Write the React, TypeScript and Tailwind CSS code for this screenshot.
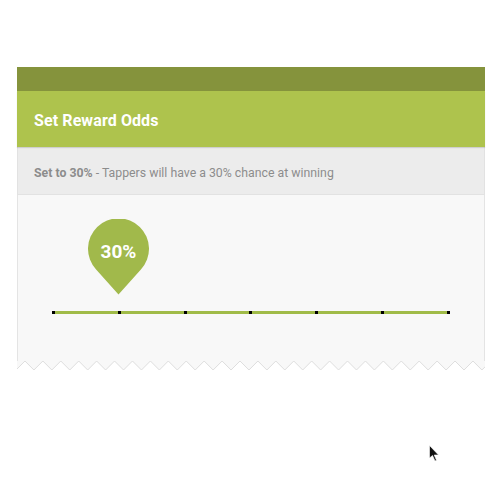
import React from "react"

const TICKS = [0, 1, 2, 3, 4, 5, 6]

function zigzagPoints(width: number, period: number, start: number, depth: number) {
  const pts: string[] = []
  for (let x = start; x <= width + period; x += period / 2) {
    const i = Math.round((x - start) / (period / 2))
    const y = i % 2 === 0 ? depth : 0
    pts.push(`${x.toFixed(2)},${y}`)
  }
  return pts
}

function Zigzag() {
  const w = 468
  const pts = zigzagPoints(w, 17.92, -1, 9)
  return (
    <svg width={w} height={10} viewBox={`0 0 ${w} 10`} className="block">
      <polygon points={`0,0 ${pts.join(" ")} ${w},0`} fill="#f8f8f8" />
      <polyline points={pts.join(" ")} fill="none" stroke="#dedede" strokeWidth={1} />
    </svg>
  )
}

function Pin({ label }: { label: string }) {
  return (
    <div className="relative w-[61px] h-[76px] ml-[70px]">
      <svg width={61} height={76} viewBox="0 0 61 76" className="block">
        <path d="M30.5 75.5 L8.1 50.5 A30.5 30.5 0 1 1 52.9 50.5 Z" fill="#a1b94b" />
      </svg>
      <div className="absolute left-0 top-[3px] w-[61px] h-[61px] flex items-center justify-center text-white text-[19px] font-bold">
        {label}
      </div>
    </div>
  )
}

function Cursor() {
  return (
    <svg width={12} height={18} viewBox="0 0 12 18" className="absolute left-[429px] top-[445px]">
      <path d="M0.5 0.5 L0.5 13 L3.5 10.5 L6 16 L7.5 15.3 L5.2 10 L9.5 10 Z" fill="#111" stroke="#fff" strokeWidth={0.6} />
    </svg>
  )
}

export default function App() {
  return (
    <div className="relative w-[500px] h-[500px] bg-white pt-[67px] pl-[17px]" style={{ fontFamily: "Roboto, 'Noto Sans', sans-serif" }}>
      <div className="w-[468px]">
        <div className="h-[24px] bg-[#85933c]" />
        <div className="h-[56px] bg-[#aec34d] flex items-center px-[17px] pt-[4px] shadow-[0_1px_1px_rgba(0,0,0,0.12)] relative">
          <span className="text-white text-[16px] font-bold tracking-[0.1px]">Set Reward Odds</span>
        </div>
        <div className="h-[48px] bg-[#ececec] border-l border-r border-b border-[#e2e2e2] flex items-center px-[16px] pt-[5px] text-[12.3px] text-[#8c8c8c]">
          <span className="font-bold">Set to 30%</span>
          <span>&nbsp;- Tappers will have a 30% chance at winning</span>
        </div>
        <div className="bg-[#f8f8f8] border-l border-r border-[#e4e4e4] pt-[24px] pb-[47px]">
          <Pin label="30%" />
          <div className="relative ml-[34px] w-[398px] h-[3px] mt-[16px] bg-[#a0bb48] flex justify-between items-center">
            {TICKS.map((t) => (
              <div key={t} className="w-[3px] h-[3px] bg-black" />
            ))}
          </div>
        </div>
        <Zigzag />
      </div>
      <Cursor />
    </div>
  )
}
